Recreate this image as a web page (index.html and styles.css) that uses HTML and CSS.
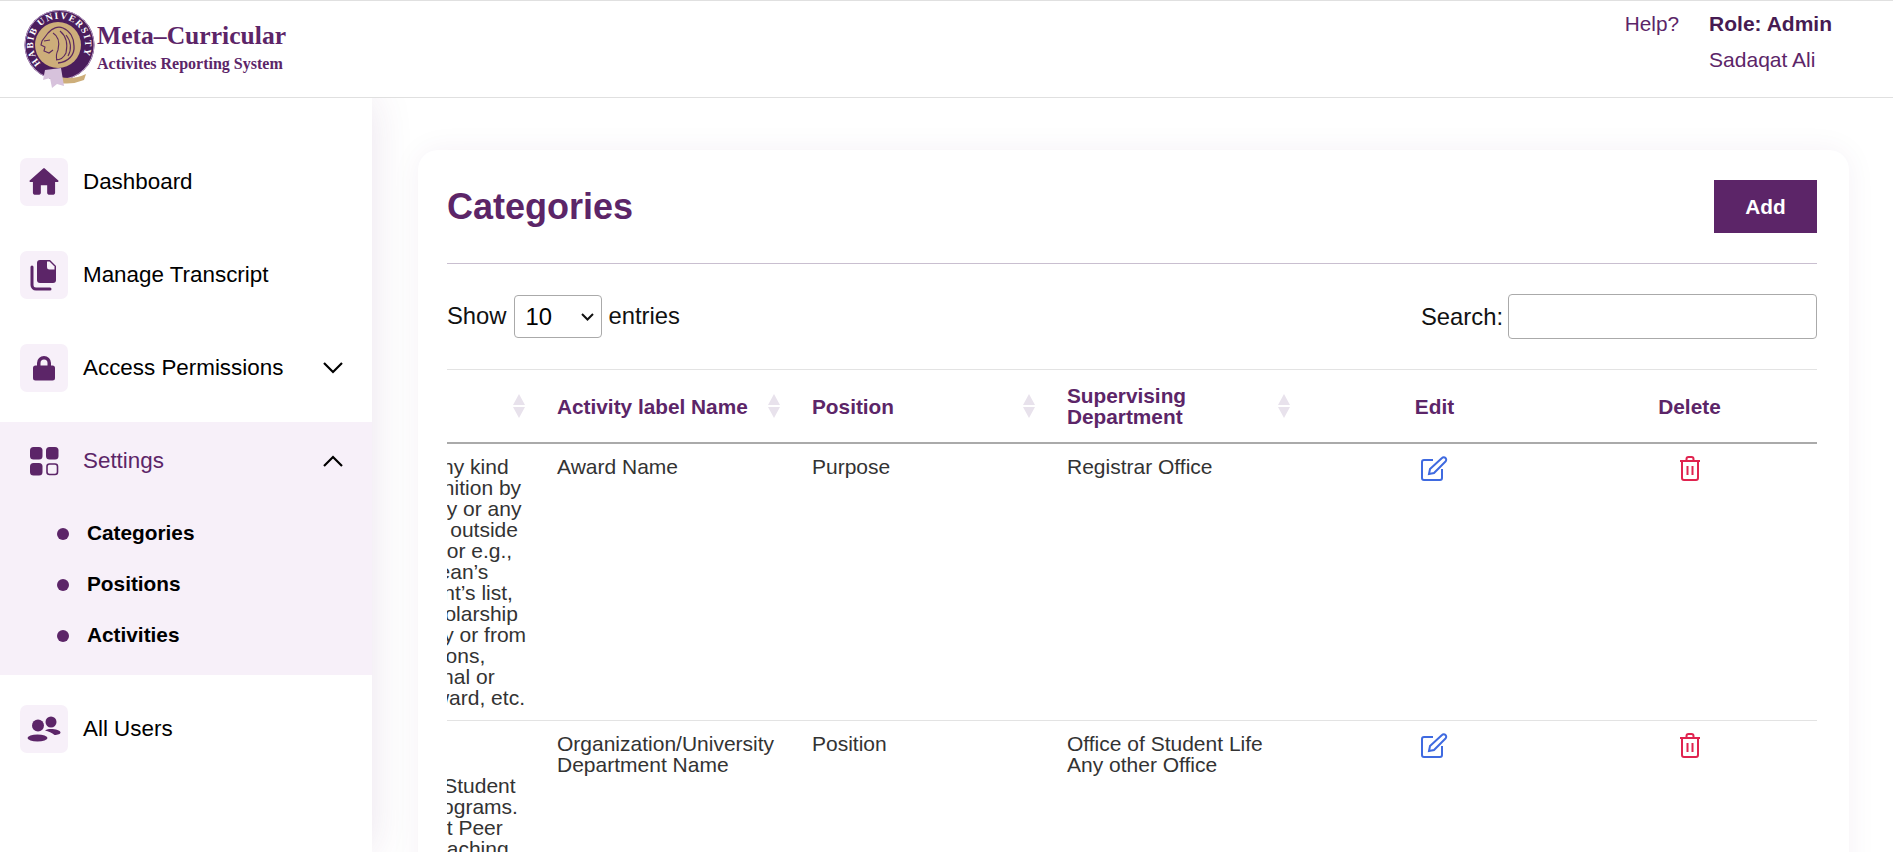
FILE: index.html
```html
<!DOCTYPE html>
<html lang="en">
<head>
<meta charset="utf-8">
<title>Categories</title>
<link rel="stylesheet" href="styles.css">
</head>
<body>
<header class="topbar">
  <div class="brand">
    <svg class="seal" viewBox="22 2 75 92" width="75" height="92" aria-hidden="true">
      <defs><path id="sealArc" d="M41 63.300A26 26 0 1 1 82.500 56"/></defs>
      <circle cx="59.500" cy="45" r="35" fill="#4a1d5c"/>
      <circle cx="59.500" cy="45" r="34.500" fill="none" stroke="#b79ac4" stroke-width="1"/>
      <circle cx="58" cy="45" r="23" fill="#cdae7a"/>
      <path d="M48 33C52 28 58 26 63 28C70 31 74 38 74 46C75 55 68 62 58 63" fill="none" stroke="#5c2a5e" stroke-width="1.300"/>
      <path d="M48 33L42 41L41 45L45 47L44 51L49 53L53 50M53 33C58 36 60 42 58 50M60 31C66 36 68 44 66 53C64 57 60 60 56 60M66 35C71 41 72 49 68 56M58 50C56 54 56 57 57 60" fill="none" stroke="#5c2a5e" stroke-width="1.100"/>
      <path d="M44 41L50 40" stroke="#5c2a5e" stroke-width="1.200"/>
      <text class="seal-text"><textPath href="#sealArc" textLength="112" lengthAdjust="spacing">HABIB UNIVERSITY</textPath></text>
      <path d="M60 77Q74 80 86 74L84 80Q72 85 60 83Z" fill="#cdae7a"/>
      <path d="M45 70L61 68L64 86L57 84L52 88L50 78L43 80Z" fill="#d7c2dc"/>
    </svg>
    <div class="brand-text">
      <span class="brand-name">Meta–Curricular</span>
      <span class="brand-sub">Activites Reporting System</span>
    </div>
  </div>
  <div class="account">
    <a class="help">Help?</a>
    <div class="who">
      <strong class="role">Role: Admin</strong>
      <span class="user">Sadaqat Ali</span>
    </div>
  </div>
</header>

<div class="shell">
  <nav class="sidebar">
    <a class="nav-item">
      <span class="nav-icon">
        <svg viewBox="0 0 24 24" width="38" height="38"><path d="M10 19v-5h4v5c0 .55.45 1 1 1h3c.55 0 1-.45 1-1v-7h1.700c.46 0 .68-.57.33-.87L12.670 3.600c-.38-.34-.96-.34-1.340 0l-8.360 7.530c-.34.3-.13.87.33.87H5v7c0 .55.45 1 1 1h3c.55 0 1-.45 1-1z"/></svg>
      </span>
      <span class="nav-label">Dashboard</span>
    </a>
    <a class="nav-item">
      <span class="nav-icon">
        <svg viewBox="0 0 30 34" width="30" height="34"><path d="M8 5a3 3 0 0 1 3-3h10l6 6v14a3 3 0 0 1-3 3H11a3 3 0 0 1-3-3z"/><path class="fold" d="M18 3.500h2.500L25.500 8.500v3h-5a2.500 2.500 0 0 1-2.500-2.500z"/><path d="M3 9v18a4 4 0 0 0 4 4h14" fill="none" stroke="#5c2568" stroke-width="3" stroke-linecap="round"/></svg>
      </span>
      <span class="nav-label">Manage Transcript</span>
    </a>
    <a class="nav-item">
      <span class="nav-icon">
        <svg viewBox="0 0 24 26" width="24" height="26"><path d="M1 13a2.500 2.500 0 0 1 2.500-2.500H5V8a7 7 0 0 1 14 0v2.500h1.500A2.500 2.500 0 0 1 23 13v10a2.500 2.500 0 0 1-2.500 2.500h-17A2.500 2.500 0 0 1 1 23zM8.500 10.500h7V8a3.500 3.500 0 0 0-7 0z" fill-rule="evenodd"/></svg>
      </span>
      <span class="nav-label">Access Permissions</span>
      <svg class="chev" viewBox="0 0 20 12" width="20" height="12"><path d="M1 1l9 9 9-9"/></svg>
    </a>
    <div class="nav-group">
      <a class="nav-item nav-item-open">
        <span class="nav-icon">
          <svg viewBox="0 0 30 30" width="30" height="30"><rect x="1" y="1" width="12.500" height="12.500" rx="3.500"/><rect x="17" y="1" width="12.500" height="12.500" rx="3.500"/><rect x="1" y="17" width="12.500" height="12.500" rx="3.500"/><rect x="18" y="18" width="10.500" height="10.500" rx="2.500" fill="none" stroke="#5c2568" stroke-width="1.600"/></svg>
        </span>
        <span class="nav-label">Settings</span>
        <svg class="chev" viewBox="0 0 20 12" width="20" height="12"><path d="M1 11l9-9 9 9"/></svg>
      </a>
      <ul class="subnav">
        <li class="subnav-item"><span class="subnav-text">Categories</span></li>
        <li class="subnav-item"><span class="subnav-text">Positions</span></li>
        <li class="subnav-item"><span class="subnav-text">Activities</span></li>
      </ul>
    </div>
    <a class="nav-item">
      <span class="nav-icon">
        <svg viewBox="0 0 34 26" width="34" height="26"><circle cx="11" cy="9.500" r="6"/><circle cx="24" cy="6" r="5.500"/><ellipse cx="10.500" cy="22" rx="10" ry="3.500"/><path d="M18 14.500c2-1.500 3.500-1.500 6-1.500 4.500 0 9.500 1.500 9.500 3.500 0 1.500-2.500 2.500-6 2.500-2.500-2.500-6-3.500-9.500-4.500z"/></svg>
      </span>
      <span class="nav-label">All Users</span>
    </a>
  </nav>

  <main class="content">
    <section class="card">
      <div class="card-head">
        <h1 class="card-title">Categories</h1>
        <button class="btn-add" type="button">Add</button>
      </div>
      <div class="filters">
        <label class="length">Show
          <span class="select-box">
            <select class="length-select"><option>10</option><option>25</option><option>50</option></select>
            <svg class="select-arrow" viewBox="0 0 13 8" width="13" height="8"><path d="M1 1l5.500 5.500L12 1"/></svg>
          </span>
          entries</label>
        <label class="search">Search:
          <input class="search-input" type="search">
        </label>
      </div>
      <div class="table-wrap">
        <table class="grid">
          <thead>
            <tr>
              <th class="sortable">Description<svg class="sort" viewBox="0 0 12 24" width="12" height="24"><path d="M6 0l6 11H0zM6 24L0 13h12z"/></svg></th>
              <th class="sortable">Activity label Name<svg class="sort" viewBox="0 0 12 24" width="12" height="24"><path d="M6 0l6 11H0zM6 24L0 13h12z"/></svg></th>
              <th class="sortable">Position<svg class="sort" viewBox="0 0 12 24" width="12" height="24"><path d="M6 0l6 11H0zM6 24L0 13h12z"/></svg></th>
              <th class="sortable">Supervising Department<svg class="sort" viewBox="0 0 12 24" width="12" height="24"><path d="M6 0l6 11H0zM6 24L0 13h12z"/></svg></th>
              <th class="center">Edit</th>
              <th class="center">Delete</th>
            </tr>
          </thead>
          <tbody>
            <tr>
              <td class="long">Any award of any kind<br>Award of recognition by<br>by the University or any<br>other institution outside<br>your University or e.g.,<br>awards from Dean’s<br>the top President’s list,<br>other merit Scholarship<br>under University or from<br>or other institutions,<br>and other national or<br>international award, etc.</td>
              <td>Award Name</td>
              <td>Purpose</td>
              <td>Registrar Office</td>
              <td class="center">
                <svg class="act act-edit" viewBox="0 0 27 25" width="27" height="25"><path d="M12 4H3a2 2 0 0 0-2 2v16a2 2 0 0 0 2 2h16a2 2 0 0 0 2-2v-9"/><path d="M8 18l1-5L21 2a2.200 2.200 0 0 1 3.500 3.500L13 17z"/></svg>
              </td>
              <td class="center">
                <svg class="act act-del" viewBox="0 0 22 25" width="22" height="25"><path d="M1 5h20M7.500 5V3a2 2 0 0 1 2-2h3a2 2 0 0 1 2 2v2M3 5v17a2 2 0 0 0 2 2h12a2 2 0 0 0 2-2V5M8.500 10v9M13.500 10v9"/></svg>
              </td>
            </tr>
            <tr>
              <td class="long">Any role in<br>Being a part of<br>Member of the Student<br>Government programs.<br>such as Student Peer<br>Tutoring and Teaching<br>or any other role<br>at the University</td>
              <td>Organization/University Department Name</td>
              <td>Position</td>
              <td>Office of Student Life<br>Any other Office</td>
              <td class="center">
                <svg class="act act-edit" viewBox="0 0 27 25" width="27" height="25"><path d="M12 4H3a2 2 0 0 0-2 2v16a2 2 0 0 0 2 2h16a2 2 0 0 0 2-2v-9"/><path d="M8 18l1-5L21 2a2.200 2.200 0 0 1 3.500 3.500L13 17z"/></svg>
              </td>
              <td class="center">
                <svg class="act act-del" viewBox="0 0 22 25" width="22" height="25"><path d="M1 5h20M7.500 5V3a2 2 0 0 1 2-2h3a2 2 0 0 1 2 2v2M3 5v17a2 2 0 0 0 2 2h12a2 2 0 0 0 2-2V5M8.500 10v9M13.500 10v9"/></svg>
              </td>
            </tr>
          </tbody>
        </table>
      </div>
    </section>
  </main>
</div>
</body>
</html>
```
FILE: styles.css
```css
* { box-sizing: border-box; }
html, body { height: 100%; }
body {
  margin: 0;
  height: 100vh;
  overflow: hidden;
  display: flex;
  flex-direction: column;
  background: #fff;
  color: #000;
  font-family: "Liberation Sans", Arial, sans-serif;
}

/* top bar */
.topbar {
  flex: 0 0 98px;
  display: flex;
  justify-content: space-between;
  position: relative;
  z-index: 2;
  background: #fff;
  border-top: 1px solid #e0e0e0;
  border-bottom: 1px solid #e0e0e0;
  padding: 0 61px 0 22px;
}
.brand { display: flex; align-items: flex-start; }
.seal { display: block; margin-top: 1px; }
.seal-text {
  font-family: "Liberation Serif", serif;
  font-weight: 700;
  font-size: 9.500px;
  fill: #fff;
}
.brand-text { display: flex; flex-direction: column; padding-top: 19px; color: #5c2568; font-family: "Liberation Serif", serif; font-weight: 700; }
.brand-name { font-size: 25.600px; line-height: 32px; }
.brand-sub { font-size: 16px; line-height: 23px; }
.account { display: flex; gap: 30px; padding-top: 5px; font-size: 20.800px; line-height: 36px; color: #5c2568; }
.who { display: flex; flex-direction: column; font-size: 21px; }
.role { color: #461b52; }

/* layout */
.shell { flex: 1; display: flex; min-height: 0; }
.sidebar {
  flex: 0 0 372px;
  padding-top: 45px;
  background: #fff;
  box-shadow: 0 0 40px rgba(92, 37, 104, .12);
  position: relative;
  z-index: 1;
  font-size: 22.400px;
}
.nav-item {
  display: flex;
  align-items: center;
  padding: 15px 29px 15px 20px;
  margin-bottom: 15px;
  color: #000;
}
.nav-icon {
  flex: 0 0 48px;
  height: 48px;
  display: flex;
  align-items: center;
  justify-content: center;
  background: #f7f0f9;
  border-radius: 7px;
}
.nav-icon svg { fill: #5c2568; display: block; }
.nav-icon svg .fold { fill: #f7f0f9; }
.nav-label { margin-left: 15px; }
.chev { margin-left: auto; fill: none; stroke: #000; stroke-width: 2.200; }
.nav-group { background: #f7f0f9; padding-bottom: 13px; margin-bottom: 15px; }
.nav-item-open { margin-bottom: 0; }
.nav-item-open .nav-icon { background: transparent; }
.nav-item-open .nav-label { color: #5c2568; }
.subnav { list-style: none; margin: 0; padding: 9px 0 0 57px; }
.subnav-item {
  height: 51px;
  display: flex;
  align-items: center;
  gap: 18px;
  font-size: 20.800px;
  font-weight: 700;
}
.subnav-item::before {
  content: "";
  flex: 0 0 12px;
  height: 12px;
  margin-top: -1px;
  border-radius: 50%;
  background: #5c2568;
}
.subnav-text { padding-bottom: 4px; }

/* main */
.content { flex: 1; min-width: 0; padding: 52px 44px 0 46px; overflow: hidden; }
.card {
  background: #fff;
  border-radius: 20px;
  box-shadow: 0 0 30px rgba(92, 37, 104, .06);
  padding: 30px 32px 30px 29px;
  min-height: 900px;
}
.card-head {
  display: flex;
  justify-content: space-between;
  align-items: center;
  padding-bottom: 30px;
  border-bottom: 1px solid #c9bfd0;
}
.card-title { margin: 0; color: #5c2568; font-size: 36px; font-weight: 700; }
.btn-add {
  width: 103px;
  height: 53px;
  border: 0;
  border-radius: 0;
  background: #5c2568;
  color: #fff;
  font: 700 20.800px "Liberation Sans", Arial, sans-serif;
}
.filters {
  display: flex;
  justify-content: space-between;
  align-items: center;
  margin: 30px 0;
  height: 45px;
  font-size: 23.800px;
  color: #111;
}
.length { display: flex; align-items: center; gap: 7px; margin-top: -1px; }
.select-box { position: relative; display: block; width: 88px; height: 43px; }
.length-select {
  appearance: none;
  display: block;
  width: 88px;
  height: 43px;
  padding: 0 0 0 11px;
  background: #fff;
  border: 1px solid #aaa;
  border-radius: 4px;
  font: 23.800px "Liberation Sans", Arial, sans-serif;
  color: #000;
}
.select-arrow {
  position: absolute;
  right: 8px;
  top: 18px;
  fill: none;
  stroke: #111;
  stroke-width: 2;
  pointer-events: none;
}
.search { display: flex; align-items: center; gap: 5px; }
.search-input {
  width: 309px;
  height: 45px;
  background: #fff;
  border: 1px solid #aaa;
  border-radius: 4px;
}

/* table */
.table-wrap { overflow: hidden; border-top: 1px solid #e3e3e3; }
.grid {
  width: 1530px;
  margin-left: -160px;
  table-layout: fixed;
  border-collapse: separate;
  border-spacing: 0;
}
.grid th {
  position: relative;
  padding: 15px 30px 15px 15px;
  border-bottom: 2px solid #aaa;
  color: #5c2568;
  font-size: 20.800px;
  line-height: 21px;
  font-weight: 700;
  text-align: left;
}
.grid th.center { text-align: center; padding: 15px; }
.sort { position: absolute; right: 17px; top: 24px; fill: #e8e2ec; }
.grid td {
  padding: 12px 15px;
  border-bottom: 1px solid #e3e3e3;
  color: #333;
  font-size: 21px;
  line-height: 21px;
  vertical-align: top;
}
.grid td.center { text-align: center; }
.grid td.long { white-space: nowrap; }
.act { display: inline-block; vertical-align: top; fill: none; stroke-width: 2; }
.act-edit { stroke: #3f6ae0; }
.act-del { stroke: #e0234f; }
```
